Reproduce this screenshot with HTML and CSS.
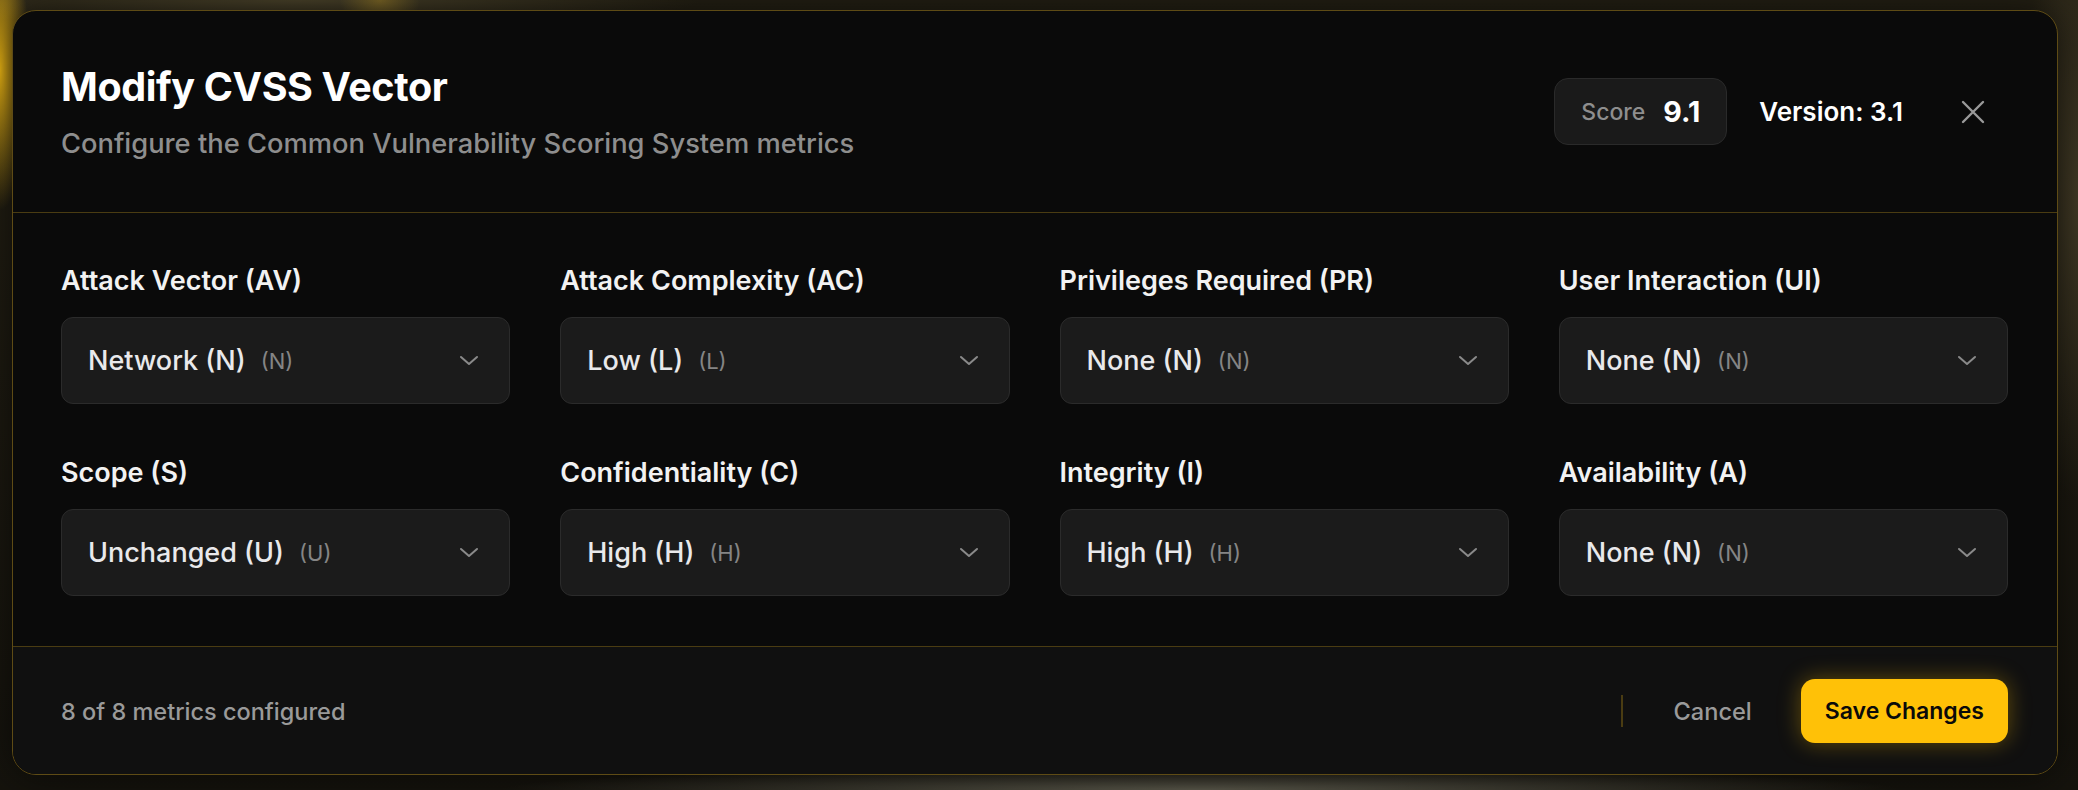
FILE: index.html
```html
<!DOCTYPE html>
<html lang="en">
<head>
    <meta charset="UTF-8">
    <meta name="viewport" content="width=device-width, initial-scale=1.0">
    <title>Modify CVSS Vector</title>
    <link rel="stylesheet" href="styles.css">
</head>
<body>
    <div class="modal">
        <div class="modal-header">
            <div class="heading">
                <h1 class="title">Modify CVSS Vector</h1>
                <p class="subtitle">Configure the Common Vulnerability Scoring System metrics</p>
            </div>
            <div class="header-meta">
                <div class="score-pill">
                    <span class="score-label">Score</span>
                    <span class="score-value">9.1</span>
                </div>
                <span class="version">Version: 3.1</span>
                <button class="close-btn" aria-label="Close">
                    <svg width="24" height="24" viewBox="0 0 24 24" fill="none" stroke="#9a9a9a" stroke-width="2.4" stroke-linecap="round">
                        <path d="M2 2L22 22M22 2L2 22"/>
                    </svg>
                </button>
            </div>
        </div>

        <div class="modal-body">
            <div class="metric">
                <label class="metric-label">Attack Vector (AV)</label>
                <button class="select"><span class="value">Network (N)</span><span class="code">(N)</span><svg class="chevron" width="20" height="11" viewBox="0 0 20 11"><path d="M2 2L10 9L18 2"/></svg></button>
            </div>
            <div class="metric">
                <label class="metric-label">Attack Complexity (AC)</label>
                <button class="select"><span class="value">Low (L)</span><span class="code">(L)</span><svg class="chevron" width="20" height="11" viewBox="0 0 20 11"><path d="M2 2L10 9L18 2"/></svg></button>
            </div>
            <div class="metric">
                <label class="metric-label">Privileges Required (PR)</label>
                <button class="select"><span class="value">None (N)</span><span class="code">(N)</span><svg class="chevron" width="20" height="11" viewBox="0 0 20 11"><path d="M2 2L10 9L18 2"/></svg></button>
            </div>
            <div class="metric">
                <label class="metric-label">User Interaction (UI)</label>
                <button class="select"><span class="value">None (N)</span><span class="code">(N)</span><svg class="chevron" width="20" height="11" viewBox="0 0 20 11"><path d="M2 2L10 9L18 2"/></svg></button>
            </div>
            <div class="metric">
                <label class="metric-label">Scope (S)</label>
                <button class="select"><span class="value">Unchanged (U)</span><span class="code">(U)</span><svg class="chevron" width="20" height="11" viewBox="0 0 20 11"><path d="M2 2L10 9L18 2"/></svg></button>
            </div>
            <div class="metric">
                <label class="metric-label">Confidentiality (C)</label>
                <button class="select"><span class="value">High (H)</span><span class="code">(H)</span><svg class="chevron" width="20" height="11" viewBox="0 0 20 11"><path d="M2 2L10 9L18 2"/></svg></button>
            </div>
            <div class="metric">
                <label class="metric-label">Integrity (I)</label>
                <button class="select"><span class="value">High (H)</span><span class="code">(H)</span><svg class="chevron" width="20" height="11" viewBox="0 0 20 11"><path d="M2 2L10 9L18 2"/></svg></button>
            </div>
            <div class="metric">
                <label class="metric-label">Availability (A)</label>
                <button class="select"><span class="value">None (N)</span><span class="code">(N)</span><svg class="chevron" width="20" height="11" viewBox="0 0 20 11"><path d="M2 2L10 9L18 2"/></svg></button>
            </div>
        </div>

        <div class="modal-footer">
            <span class="status">8 of 8 metrics configured</span>
            <div class="actions">
                <span class="divider"></span>
                <button class="cancel-btn">Cancel</button>
                <button class="save-btn">Save Changes</button>
            </div>
        </div>
    </div>
</body>
</html>
```

FILE: styles.css
```css
* {
    box-sizing: border-box;
}
html, body {
    height: 100%;
}
body {
    margin: 0;
    padding: 10px 20px 13px 12px;
    font-family: 'Inter', 'Liberation Sans', sans-serif;
    color: #fff;
    background-color: #1c1a12;
    background-image:
        radial-gradient(ellipse 30px 140px at 0px 70px, rgba(240, 185, 20, 1), rgba(240, 185, 20, 0) 100%),
        radial-gradient(ellipse 40px 30px at 380px 0px, rgba(200, 160, 40, 0.45), rgba(200, 160, 40, 0) 100%),
        radial-gradient(ellipse 700px 24px at 1200px 790px, rgba(105, 103, 88, 0.85), rgba(105, 103, 88, 0) 100%),
        radial-gradient(ellipse 400px 30px at 300px 0px, rgba(80, 72, 46, 0.9), rgba(80, 72, 46, 0) 100%),
        radial-gradient(ellipse 60px 300px at 2078px 200px, rgba(70, 62, 40, 0.9), rgba(70, 62, 40, 0) 100%),
        linear-gradient(180deg, #242014 0%, #15130d 100%);
    overflow: hidden;
}
button {
    font-family: inherit;
    cursor: pointer;
}
.modal {
    background: #0a0a0a;
    border: 1px solid #5e4b15;
    border-radius: 24px;
    overflow: hidden;
    box-shadow: 0 0 40px rgba(0, 0, 0, 0.6);
}

/* header */
.modal-header {
    display: flex;
    justify-content: space-between;
    align-items: center;
    padding: 53px 50px 50px 48px;
    border-bottom: 1px solid #4a3c12;
}
.title {
    margin: 0;
    font-size: 39.5px;
    line-height: 46px;
    font-weight: 700;
    letter-spacing: -0.01em;
}
.subtitle {
    margin: 16px 0 0;
    font-size: 27.3px;
    line-height: 36px;
    color: #8e8e8e;
    font-weight: 500;
}
.header-meta {
    display: flex;
    align-items: center;
    margin-top: -3px;
}
.score-pill {
    display: flex;
    align-items: center;
    gap: 18px;
    height: 67px;
    padding: 0 26px;
    background: #1a1a1a;
    border: 1px solid #2a2a2a;
    border-radius: 14px;
}
.score-label {
    font-size: 23px;
    color: #8e8e8e;
    font-weight: 500;
}
.score-value {
    font-size: 28.5px;
    font-weight: 700;
}
.version {
    margin-left: 32px;
    font-size: 26px;
    font-weight: 600;
}
.close-btn {
    display: flex;
    margin-left: 58px;
    margin-right: 22px;
    padding: 0;
    background: none;
    border: none;
}

/* metrics */
.modal-body {
    display: grid;
    grid-template-columns: repeat(4, 1fr);
    column-gap: 50px;
    row-gap: 53px;
    padding: 52px 49px 50px 48px;
}
.metric {
    display: flex;
    flex-direction: column;
    gap: 20px;
}
.metric-label {
    font-size: 27px;
    line-height: 32px;
    font-weight: 600;
    color: #f2f2f2;
}
.select {
    display: flex;
    align-items: center;
    height: 87px;
    padding: 0 30px 0 26px;
    background: #1b1b1b;
    border: 1px solid #2b2b2b;
    border-radius: 12px;
    color: #e9e9eb;
    text-align: left;
}
.value {
    font-size: 27px;
    font-weight: 500;
}
.code {
    margin-left: 15px;
    font-size: 22px;
    color: #858585;
}
.chevron {
    margin-left: auto;
    fill: none;
    stroke: #8a8a8a;
    stroke-width: 2;
    stroke-linecap: round;
    stroke-linejoin: round;
}

/* footer */
.modal-footer {
    display: flex;
    justify-content: space-between;
    align-items: center;
    padding: 32px 49px 31px 48px;
    background: #101010;
    border-top: 1px solid #4a3c12;
}
.status {
    font-size: 23.5px;
    color: #9a9a9a;
    font-weight: 500;
}
.actions {
    display: flex;
    align-items: center;
}
.divider {
    width: 2px;
    height: 32px;
    background: #4a3c12;
}
.cancel-btn {
    margin-left: 50px;
    padding: 0;
    background: none;
    border: none;
    font-size: 23.6px;
    font-weight: 500;
    color: #9a9a9a;
}
.save-btn {
    margin-left: 49px;
    height: 64px;
    padding: 0 24px;
    background: #ffc107;
    border: none;
    border-radius: 14px;
    font-size: 23px;
    font-weight: 600;
    color: #0a0a0a;
    box-shadow: 0 0 22px rgba(255, 193, 7, 0.35);
}
```
